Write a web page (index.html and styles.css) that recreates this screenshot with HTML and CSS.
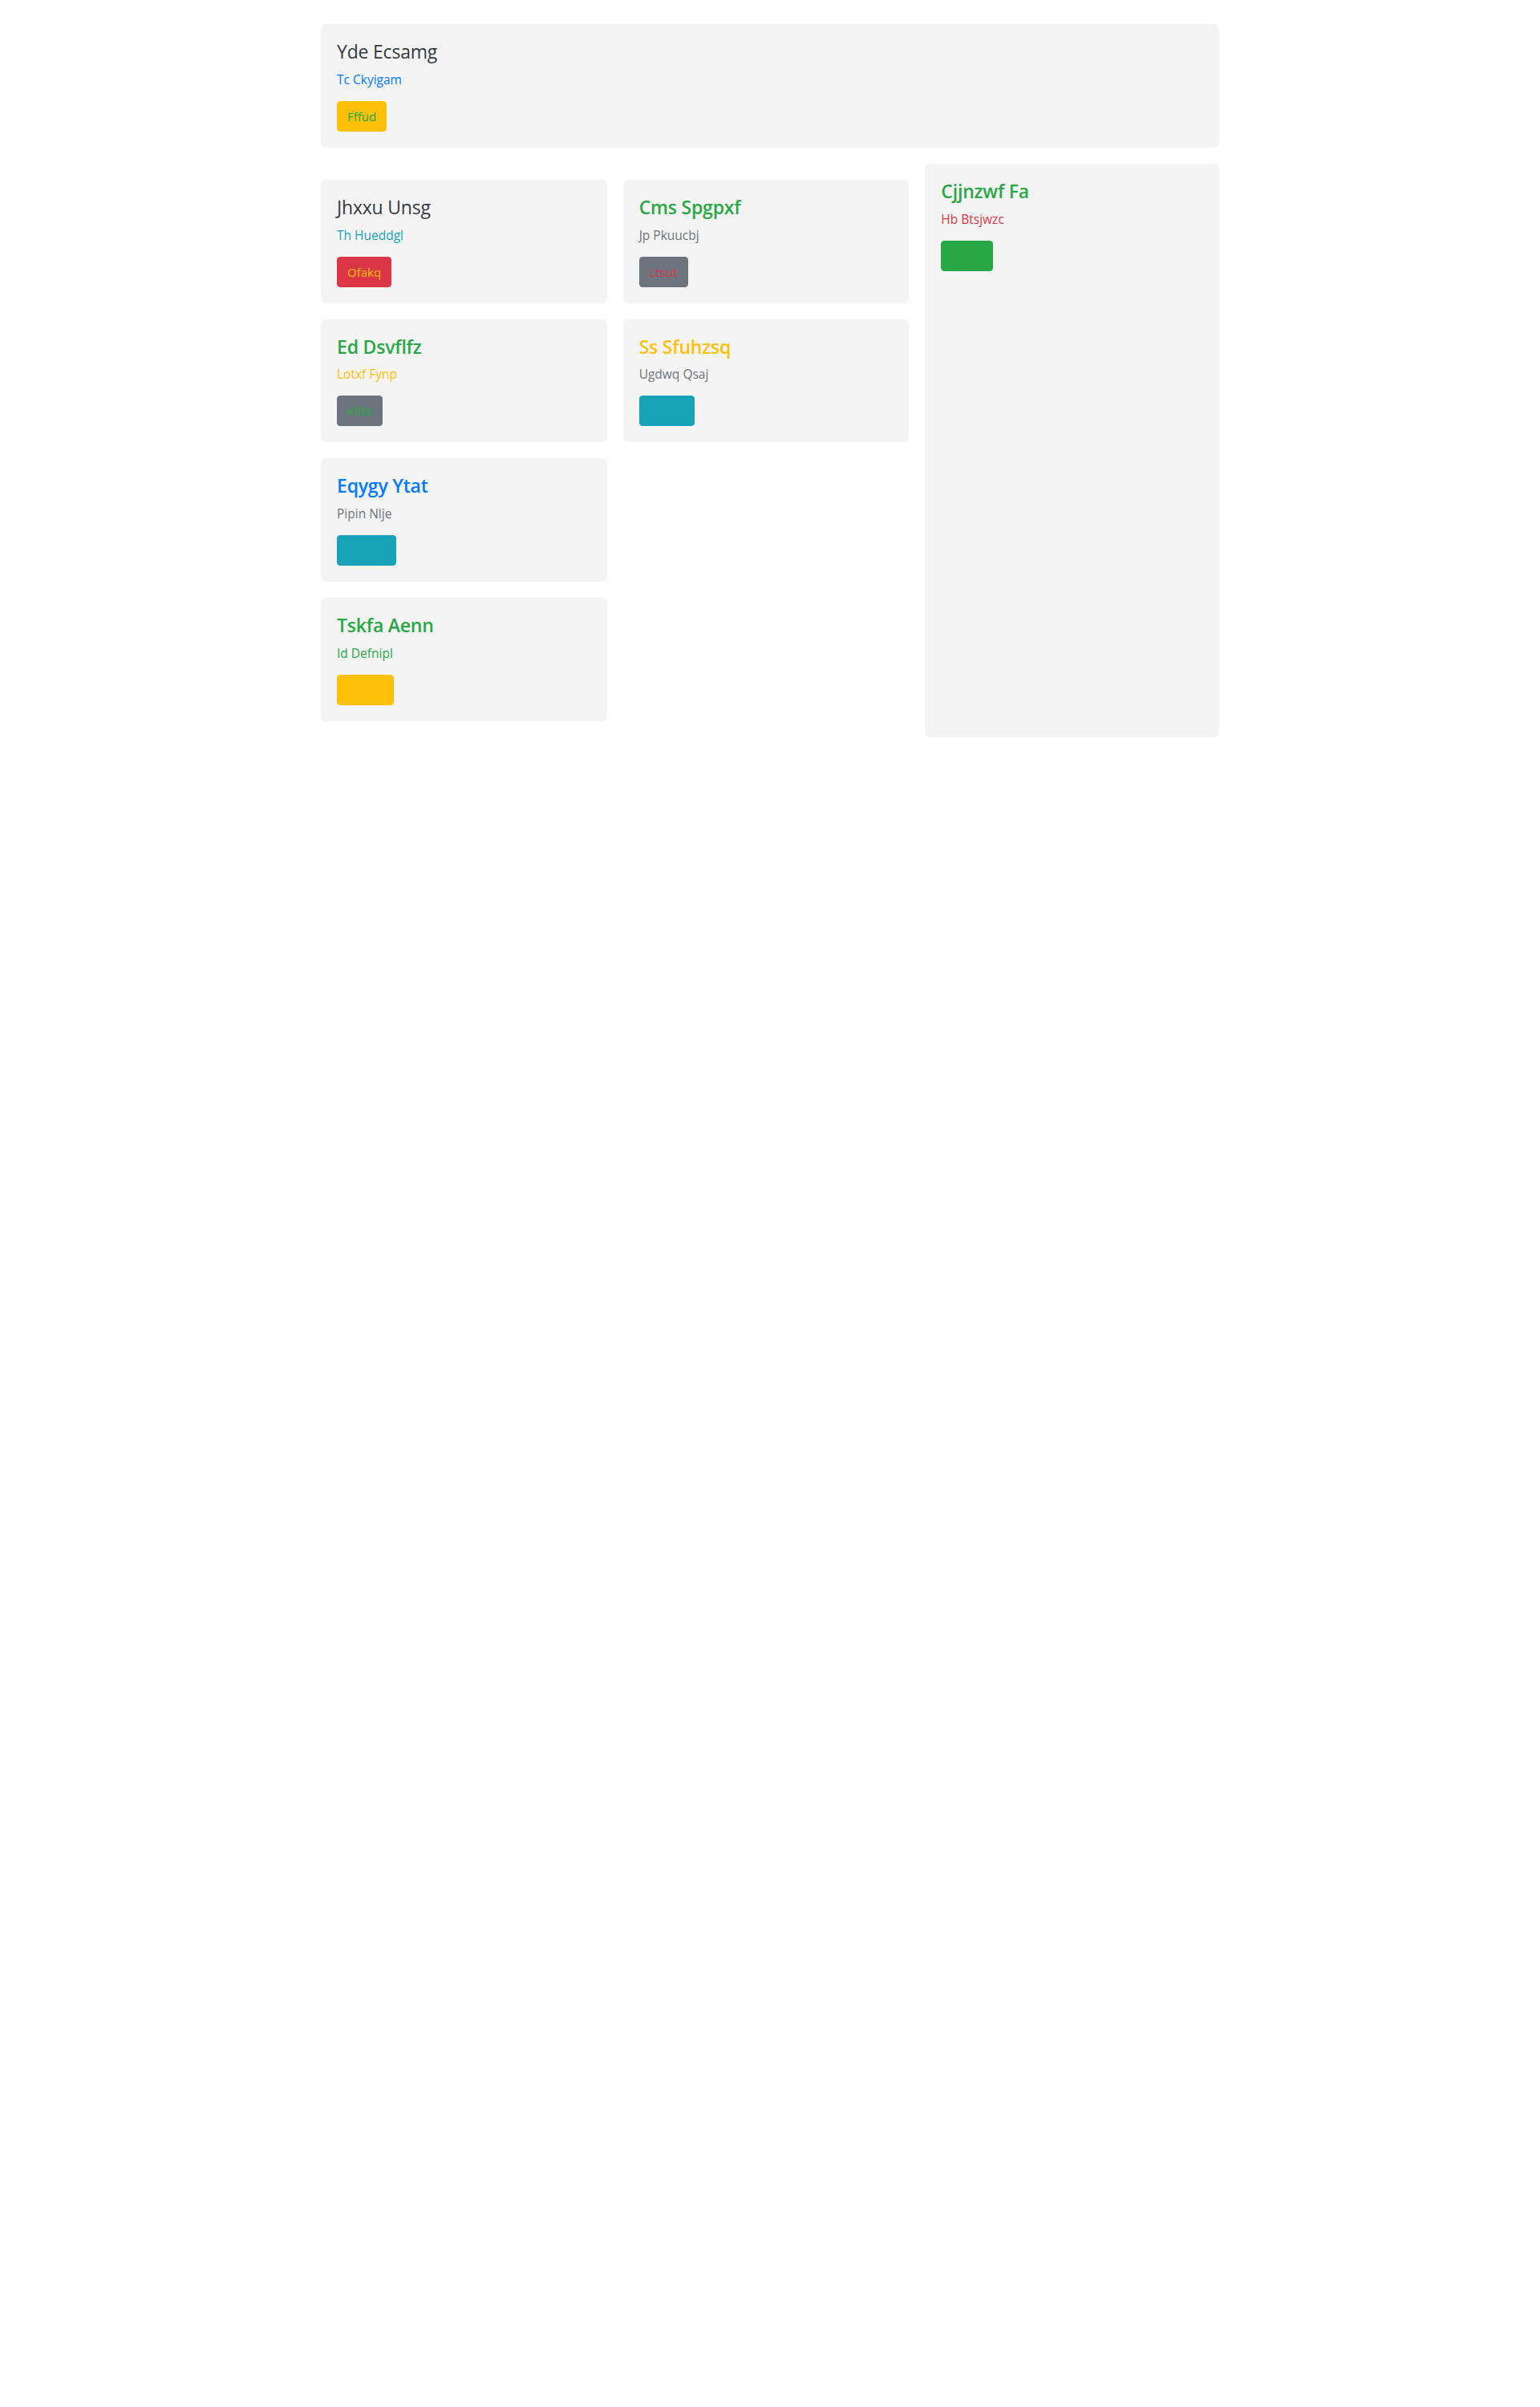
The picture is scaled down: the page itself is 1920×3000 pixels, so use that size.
FILE: index.html
```html
<!DOCTYPE html>
<html lang="en">
<head>
<meta charset="utf-8">
<title>Cards</title>
<link rel="stylesheet" href="styles.css">
</head>
<body>
<div class="container">
  <div class="card hero">
    <h4 class="card-title t-dark">Yde Ecsamg</h4>
    <p class="card-subtitle c-primary">Tc Ckyigam</p>
    <button class="btn bg-warning c-success">Fffud</button>
  </div>
  <div class="layout">
    <div class="main">
      <div class="col">
        <div class="card">
          <h4 class="card-title t-dark">Jhxxu Unsg</h4>
          <p class="card-subtitle c-info">Th Hueddgl</p>
          <button class="btn bg-danger c-warning">Ofakq</button>
        </div>
        <div class="card">
          <h4 class="card-title t-bold c-success">Ed Dsvflfz</h4>
          <p class="card-subtitle c-warning">Lotxf Fynp</p>
          <button class="btn bg-secondary c-success">Kflkt</button>
        </div>
        <div class="card">
          <h4 class="card-title t-bold c-primary">Eqygy Ytat</h4>
          <p class="card-subtitle c-secondary">Pipin Nlje</p>
          <button class="btn bg-info c-info">Vpmzo</button>
        </div>
        <div class="card">
          <h4 class="card-title t-bold c-success">Tskfa Aenn</h4>
          <p class="card-subtitle c-success">Id Defnipl</p>
          <button class="btn bg-warning c-warning">Hqazu</button>
        </div>
      </div>
      <div class="col">
        <div class="card">
          <h4 class="card-title t-bold c-success">Cms Spgpxf</h4>
          <p class="card-subtitle c-secondary">Jp Pkuucbj</p>
          <button class="btn bg-secondary c-danger">Ltsut</button>
        </div>
        <div class="card">
          <h4 class="card-title t-bold c-warning">Ss Sfuhzsq</h4>
          <p class="card-subtitle c-secondary">Ugdwq Qsaj</p>
          <button class="btn bg-info c-info">Nohrk</button>
        </div>
      </div>
    </div>
    <aside class="side">
      <div class="card tall">
        <h4 class="card-title t-bold c-success">Cjjnzwf Fa</h4>
        <p class="card-subtitle c-danger">Hb Btsjwzc</p>
        <button class="btn bg-success c-success">Mlufc</button>
      </div>
    </aside>
  </div>
</div>
</body>
</html>
```
FILE: styles.css
```css
* { box-sizing: border-box; }
html, body { margin: 0; padding: 0; background: #ffffff; }
body {
  font-family: "Open Sans", "Noto Sans", "Liberation Sans", sans-serif;
  font-size: 16px;
  line-height: 1.5;
  color: #212529;
}
.container {
  width: 1120px;
  margin: 0 auto;
  padding-top: 30px;
}
.card {
  background: #f4f4f4;
  border-radius: 6px;
  padding: 20px;
}
.hero { margin-bottom: 20px; }
.layout {
  display: grid;
  grid-template-columns: 2fr 1fr;
  column-gap: 20px;
  align-items: stretch;
}
.main {
  display: grid;
  grid-template-columns: 1fr 1fr;
  column-gap: 20px;
  align-items: start;
  padding: 20px 0;
}
.col {
  display: flex;
  flex-direction: column;
  gap: 20px;
}
.side { display: flex; }
.tall { flex: 1; }
.card-title {
  margin: 0 0 8px 0;
  font-size: 23px;
  line-height: 28.8px;
  font-weight: 500;
  letter-spacing: -0.2px;
}
.t-dark { color: #343a40; }
.t-bold { font-weight: 600; }
.card-subtitle {
  margin: 0 0 15px 0;
  font-size: 15.5px;
  line-height: 24px;
}
.btn {
  display: inline-block;
  font-family: inherit;
  font-size: 15px;
  line-height: 24px;
  padding: 6px 12px;
  border: 1px solid transparent;
  border-radius: 4px;
  cursor: pointer;
  vertical-align: top;
}
.bg-warning { background: #ffc107; border-color: #ffc107; }
.bg-danger { background: #dc3545; border-color: #dc3545; }
.bg-secondary { background: #6c757d; border-color: #6c757d; }
.bg-info { background: #17a2b8; border-color: #17a2b8; }
.bg-success { background: #28a745; border-color: #28a745; }
.c-primary { color: #007bff; }
.c-success { color: #28a745; }
.c-info { color: #17a2b8; }
.c-warning { color: #ffc107; }
.c-danger { color: #dc3545; }
.c-secondary { color: #6c757d; }
```
